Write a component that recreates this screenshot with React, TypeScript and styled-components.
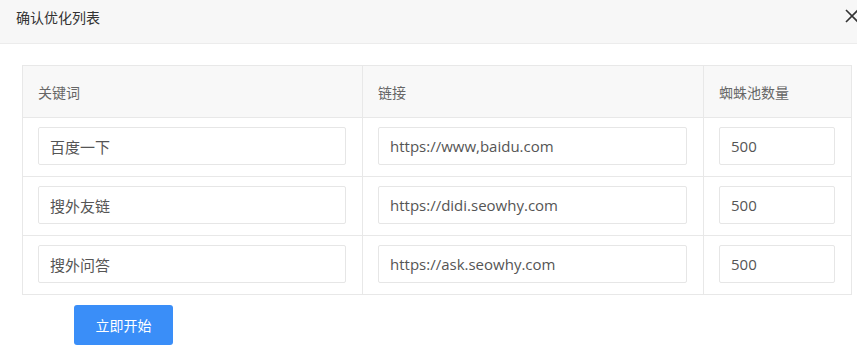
import React, { useState } from 'react';
import styled, { createGlobalStyle } from 'styled-components';

const GlobalStyle = createGlobalStyle`
  html, body {
    margin: 0;
    padding: 0;
    background: #fff;
    font-family: "Open Sans", "Noto Sans CJK SC", sans-serif;
  }
`;

const Dialog = styled.div`
  width: 857px;
  height: 359px;
  background: #fff;
  overflow: hidden;
`;

const Header = styled.div`
  height: 43px;
  display: flex;
  align-items: center;
  justify-content: space-between;
  padding: 0 0 0 16px;
  background: #f7f7f7;
  border-bottom: 1px solid #ececec;
`;

const Title = styled.h3`
  margin: 0;
  font-size: 14px;
  font-weight: 400;
  color: #333;
  line-height: 1;
  padding-bottom: 8px;
`;

const CloseButton = styled.button`
  border: none;
  background: none;
  padding: 0;
  margin: 0 0 12px 0;
  width: 12px;
  height: 14px;
  display: flex;
  align-items: center;
  cursor: pointer;
  overflow: hidden;
`;

const Body = styled.div`
  padding: 21px 7px 0 22px;
`;

const Table = styled.table`
  border-collapse: collapse;
  table-layout: fixed;
  width: 829px;
`;

const HeadCell = styled.th`
  height: 51px;
  padding: 0 16px 0 15px;
  text-align: left;
  font-weight: 400;
  font-size: 14px;
  color: #666;
  background: #f8f8f8;
  border: 1px solid #e8e8e8;
`;

const Cell = styled.td`
  padding: 9px 16px 11px 15px;
  border: 1px solid #e8e8e8;
  height: 38px;
`;

const Input = styled.input`
  box-sizing: border-box;
  display: block;
  width: 100%;
  height: 38px;
  padding: 0 11px;
  border: 1px solid #e6e6e6;
  border-radius: 2px;
  font-family: "Open Sans", "Noto Sans CJK SC", sans-serif;
  font-size: 15px;
  color: #555;
  outline: none;
  background: #fff;
`;

const Footer = styled.div`
  padding: 10px 0 0 52px;
`;

const StartButton = styled.button`
  width: 99px;
  height: 40px;
  border: none;
  border-radius: 3px;
  background: #3a8ef8;
  color: #fff;
  font-family: "Open Sans", "Noto Sans CJK SC", sans-serif;
  font-size: 14px;
  cursor: pointer;
`;

const initialRows = [
  { keyword: '百度一下', url: 'https://www,baidu.com', count: '500' },
  { keyword: '搜外友链', url: 'https://didi.seowhy.com', count: '500' },
  { keyword: '搜外问答', url: 'https://ask.seowhy.com', count: '500' },
];

const App = () => {
  const [rows, setRows] = useState(initialRows);

  const update = (i: number, key: 'keyword' | 'url' | 'count', value: string) => {
    setRows((prev) => prev.map((r, idx) => (idx === i ? { ...r, [key]: value } : r)));
  };

  return (
    <>
      <GlobalStyle />
      <Dialog>
        <Header>
          <Title>确认优化列表</Title>
          <CloseButton title="关闭">
            <svg width="16" height="14" viewBox="0 0 16 14" style={{ flexShrink: 0 }}>
              <path d="M1 1 L13 13 M13 1 L1 13" stroke="#333" strokeWidth="1.6" fill="none" />
            </svg>
          </CloseButton>
        </Header>

        <Body>
          <Table>
            <colgroup>
              <col style={{ width: 340 }} />
              <col style={{ width: 341 }} />
              <col style={{ width: 148 }} />
            </colgroup>
            <thead>
              <tr>
                <HeadCell>关键词</HeadCell>
                <HeadCell>链接</HeadCell>
                <HeadCell>蜘蛛池数量</HeadCell>
              </tr>
            </thead>
            <tbody>
              {rows.map((row, i) => (
                <tr key={i}>
                  <Cell>
                    <Input value={row.keyword} onChange={(e) => update(i, 'keyword', e.target.value)} />
                  </Cell>
                  <Cell>
                    <Input value={row.url} onChange={(e) => update(i, 'url', e.target.value)} />
                  </Cell>
                  <Cell>
                    <Input value={row.count} onChange={(e) => update(i, 'count', e.target.value)} />
                  </Cell>
                </tr>
              ))}
            </tbody>
          </Table>
          <Footer>
            <StartButton>立即开始</StartButton>
          </Footer>
        </Body>
      </Dialog>
    </>
  );
};

export default App;
